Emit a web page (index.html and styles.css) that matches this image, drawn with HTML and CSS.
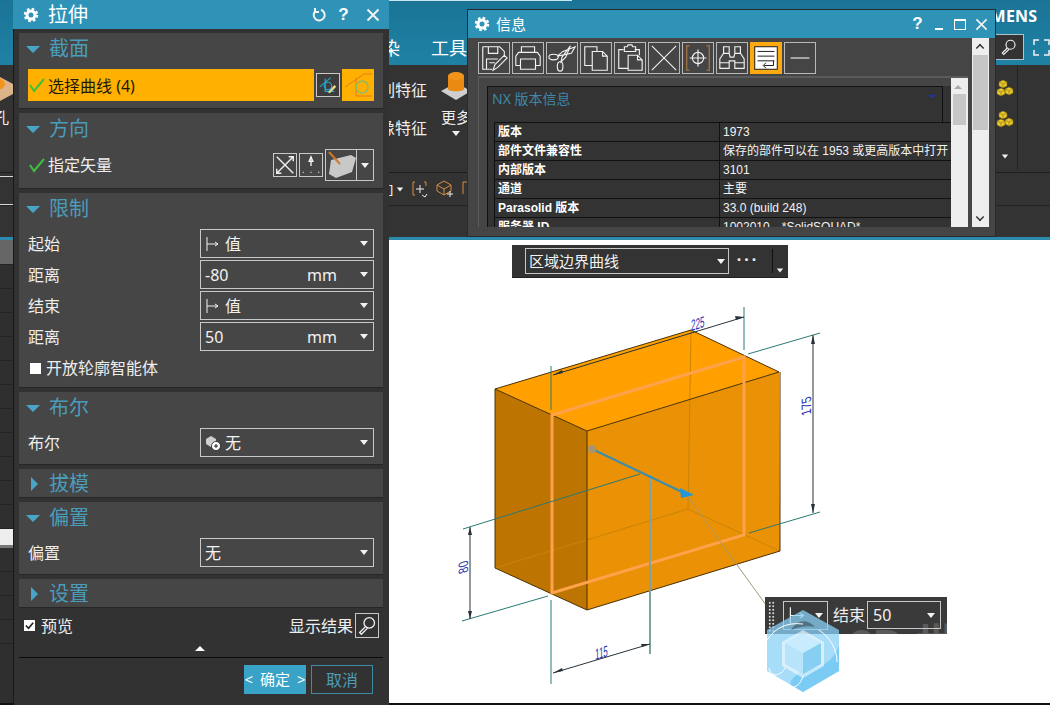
FILE: index.html
```html
<!DOCTYPE html>
<html lang="zh">
<head>
<meta charset="utf-8">
<title>拉伸</title>
<link rel="stylesheet" href="styles.css">
</head>
<body>
<div class="desk">
  <header class="top">
    <span class="menu-item menu-a">渲染</span>
    <span class="menu-item">工具</span>
    <span class="brand">SIEMENS</span>
    <div class="top-tools">
      <span class="top-search"><svg class="ic" viewBox="0 0 24 24"><circle cx="14" cy="9" r="6"/><path d="M10 13l-7 7 2 2 7-7"/></svg></span>
      <svg class="ic fullscreen" viewBox="0 0 17 17"><path d="M1 6V1h5M11 1h5v5M16 11v5h-5M6 16H1v-5"/></svg>
    </div>
  </header>
  <section class="ribbon">
    <div class="rib-left">
      <svg class="hole" viewBox="0 0 26 28"><path class="c-tan" d="M0 10l13-7 13 7v10l-13 7-13-7z"/><ellipse class="c-org" cx="9" cy="10" rx="9" ry="6"/></svg>
      <span class="rib-left-t">孔</span>
    </div>
    <div class="rib-feats">
      <span>阵列特征</span>
      <span>镜像特征</span>
    </div>
    <div class="rib-more">
      <svg class="more-ic" viewBox="0 0 32 32"><path class="c-grey" d="M1 21l15-8 15 8-15 9z"/><path class="c-org2" d="M8 6v13c0 3 16 3 16 0V6z"/><ellipse class="c-org" cx="16" cy="6" rx="8" ry="4"/></svg>
      <span class="more-t">更多</span>
      <i class="caret"></i>
    </div>
    <div class="rib-gold">
      <svg class="gold" viewBox="0 0 18 18"><path d="M7 1l4 2v4l-4 2-4-2V3zM13 8l4 2v4l-4 2-4-2v-4zM5 9l4 2v4l-4 2-4-2v-4z"/><path class="gold-l" d="M3 3l4 2 4-2M7 5v4M9 10l4 2 4-2M13 12v4M1 11l4 2 4-2M5 13v4"/></svg>
      <svg class="gold" viewBox="0 0 18 18"><path d="M7 1l4 2v4l-4 2-4-2V3zM13 8l4 2v4l-4 2-4-2v-4zM5 9l4 2v4l-4 2-4-2v-4z"/><path class="gold-l" d="M3 3l4 2 4-2M7 5v4M9 10l4 2 4-2M13 12v4M1 11l4 2 4-2M5 13v4"/></svg>
      <i class="caret gold-caret"></i>
    </div>
  </section>
  <section class="strip">
    <div class="strip-left"><i></i><i></i></div>
    <span class="strip-txt">]</span><i class="caret strip-caret"></i>
    <svg class="strip-ic" viewBox="0 0 18 18"><path class="or" d="M4 2H2v13h2M13 2h2v4"/><path d="M5 9h8M9 5v8M11 15l3 2 2-3"/></svg>
    <svg class="strip-ic" viewBox="0 0 18 18"><path class="or" d="M1 5l7-4 7 4v6l-7 4-7-4zM1 5l7 4 7-4M8 9v6"/><path d="M14 11v6M11 14h6"/></svg>
    <svg class="strip-ic" viewBox="0 0 18 18"><path class="or" d="M2 14V2h12v4"/></svg>
  </section>
  <section class="strip2"></section>
  <div class="teal-line"></div>
  <main class="main">
    <aside class="rail">
      <div class="rail-row rail-grey"></div>
      <div class="rail-row"></div><div class="rail-row"></div><div class="rail-row"></div><div class="rail-row"></div><div class="rail-row"></div><div class="rail-row"></div><div class="rail-row"></div><div class="rail-row"></div><div class="rail-row"></div><div class="rail-row"></div><div class="rail-row"></div>
      <div class="rail-white"></div>
      <div class="rail-row"></div><div class="rail-row"></div><div class="rail-row"></div><div class="rail-row"></div>
    </aside>
    <div class="canvas">
      <svg class="scene" viewBox="389 240 661 463">
        <polygon class="f-top" points="495,389 691,330 779,372 587,431"/>
        <polygon class="f-left" points="495,389 587,431 587,610 495,568"/>
        <polygon class="f-right" points="587,431 779,372 780,551 587,610"/>
        <path class="hidden" d="M691 330L688 509M495 568L688 509L780 551"/>
        <path class="edge" d="M495 389L691 330L779 372L587 431ZM495 389V568L587 610L780 551V372M587 431V610"/>
        <path class="glow" d="M552 415L744 357V535L552 593Z"/>
        <path class="ext" d="M551 366V410M744 307V350M748 354L820 333M749 533L820 512M463 529L640 474M462 621L548 596M551 600V684"/>
        <path class="ext-g" d="M650 475V654"/>
        <path class="dim" d="M553 375L744 317M813 335V513M470 527V619M553 673L650 644"/>
        <path class="head" d="M553 375l9-5 1 3zM744 317l-9-1 1 4zM813 335l-2 9h4zM813 513l-2-9h4zM470 527l-2 8h4zM470 619l-2-8h4zM553 673l9-5 1 3zM650 644l-9 0 1 3z"/>
        <text class="dtx" transform="translate(691,331) skewY(-17) scale(.62,1.2)">225</text>
        <text class="dtx" transform="matrix(0,-.85,1.05,-.32,811,414)">175</text>
        <text class="dtx" transform="matrix(0,-.85,1.05,-.32,468,572)">80</text>
        <text class="dtx" transform="translate(595,660) skewY(-17) scale(.62,1.2)">115</text>
        <path class="leader" d="M688 497L766 605"/>
        <path class="vec" d="M592 449L682 492"/>
        <path class="vec-head" d="M680 488l14 7-13 3z"/>
        <circle class="ball" cx="592" cy="449" r="4"/>
      </svg>
      <div class="float-a">
        <div class="sel fa-sel"><span>区域边界曲线</span><i class="caret push"></i></div>
        <span class="dots">···</span>
        <span class="fa-div"></span>
        <i class="caret fa-caret"></i>
      </div>
      <div class="float-b">
        <span class="grip"></span>
        <div class="sel fb-sel1"><svg class="lim" viewBox="0 0 16 16"><path d="M2 1v14M2 8h11M10 6l3 2-3 2"/></svg><i class="caret push"></i></div>
        <span class="fb-t">结束</span>
        <div class="sel fb-sel2"><span>50</span><i class="caret push"></i></div>
        <span class="wm-text">3D 世界</span>
      </div>
      <svg class="wm" viewBox="0 0 72 82">
        <path class="wm-a" d="M36 0l36 20v41L36 82 0 61V20z"/>
        <path class="wm-b" d="M36 82l36-21V36C66 52 52 60 38 58 28 66 22 70 24 75z"/>
        <path class="wm-d" d="M24 20C30 10 40 8 48 17c-8-2-16 0-24 3z"/>
        <path class="wm-c" d="M0 30C8 18 20 12 36 14M52 20c12 8 18 20 18 32M36 66c-2 6-4 10-12 12M18 58C14 66 4 68 2 58"/>
        <path class="wm-ring" d="M36 20l21 12v24L36 68 15 56V32z"/>
        <path class="wm-face1" d="M36 23l18 10-18 10-18-10z"/>
        <path class="wm-face2" d="M18 33l18 10v21L18 54z"/>
        <path class="wm-face3" d="M54 33L36 43v21l18-10z"/>
      </svg>
    </div>
  </main>
  <div class="base-line"></div>

  <!-- 拉伸 dialog -->
  <div class="dialog">
    <div class="dlg-title">
      <svg class="gear" viewBox="0 0 16 16"><circle cx="8" cy="8" r="4"/><circle class="teeth" cx="8" cy="8" r="6"/></svg>
      <span class="dlg-name">拉伸</span>
      <svg class="ic tb-ic reset" viewBox="0 0 16 16"><path d="M5 3.500A5.500 5.500 0 1 0 10 2.800M4 1v4h4"/></svg>
      <span class="tb-q">?</span>
      <svg class="ic tb-ic" viewBox="0 0 16 16"><path d="M2.500 2.500l11 11M13.500 2.500l-11 11"/></svg>
    </div>
    <div class="dlg-body">
      <section class="sec">
        <h2 class="sec-h"><i class="tri-d"></i>截面</h2>
        <div class="sec-b">
          <div class="pick">
            <div class="pick-main"><svg class="check" viewBox="0 0 16 16"><path d="M1 8l4 6L15 2"/></svg><span>选择曲线 (4)</span></div>
            <span class="btn-24 btn-curve"><svg viewBox="0 0 24 24"><path class="blu" d="M3 14L15 4M9 5v14h10"/><circle class="blu" cx="12" cy="13" r="4"/><path class="yel" d="M12 20l7-8 2 2-7 7z"/></svg></span>
            <span class="btn-32"><svg viewBox="0 0 32 32"><path class="rd" d="M3 18L22 5h8M14 9v18h16"/><circle class="gr" cx="20" cy="18" r="6"/></svg></span>
          </div>
        </div>
      </section>
      <section class="sec">
        <h2 class="sec-h"><i class="tri-d"></i>方向</h2>
        <div class="sec-b">
          <div class="row">
            <svg class="check check-g" viewBox="0 0 16 16"><path d="M1 8l4 6L15 2"/></svg><span>指定矢量</span>
            <span class="vec-tools">
              <span class="btn-24"><svg class="ic" viewBox="0 0 24 24"><path d="M3 3l18 18M21 3L3 21M16 3h5v5M3 16v5h5"/></svg></span>
              <span class="btn-24"><svg class="ic" viewBox="0 0 24 24"><path d="M12 5v8M3 20h1M11.500 20h1M20 20h1"/><path d="M12 3l-2 5h4z"/></svg></span>
              <span class="vec-pick">
                <span class="vec-pick-ic"><svg viewBox="0 0 30 30"><path class="sheet" d="M5 10l20-5 5 3-4 14-16 6-7-4z"/><path class="or2" d="M3 2l11 12"/></svg></span>
                <span class="vec-pick-ar"><i class="caret"></i></span>
              </span>
            </span>
          </div>
        </div>
      </section>
      <section class="sec">
        <h2 class="sec-h"><i class="tri-d"></i>限制</h2>
        <div class="sec-b stack">
          <div class="row"><span class="lab">起始</span><div class="sel"><svg class="lim" viewBox="0 0 16 16"><path d="M2 1v14M2 8h11M10 6l3 2-3 2"/></svg><span>值</span><i class="caret push"></i></div></div>
          <div class="row"><span class="lab">距离</span><div class="sel"><span>-80</span><span class="unit">mm</span><i class="caret"></i></div></div>
          <div class="row"><span class="lab">结束</span><div class="sel"><svg class="lim" viewBox="0 0 16 16"><path d="M2 1v14M2 8h11M10 6l3 2-3 2"/></svg><span>值</span><i class="caret push"></i></div></div>
          <div class="row"><span class="lab">距离</span><div class="sel"><span>50</span><span class="unit">mm</span><i class="caret"></i></div></div>
          <div class="row row-chk"><i class="box"></i><span>开放轮廓智能体</span></div>
        </div>
      </section>
      <section class="sec">
        <h2 class="sec-h"><i class="tri-d"></i>布尔</h2>
        <div class="sec-b">
          <div class="row"><span class="lab">布尔</span><div class="sel"><svg class="bool" viewBox="0 0 16 16"><path class="boolc" d="M1 4l5-3 5 3v5l-5 3-5-3z"/><circle class="boold" cx="11" cy="11" r="4.500"/><path class="boolp" d="M9 11h4M11 9v4"/></svg><span>无</span><i class="caret push"></i></div></div>
        </div>
      </section>
      <section class="sec sec-c"><h2 class="sec-h"><i class="tri-r"></i>拔模</h2></section>
      <section class="sec">
        <h2 class="sec-h"><i class="tri-d"></i>偏置</h2>
        <div class="sec-b">
          <div class="row"><span class="lab">偏置</span><div class="sel"><span>无</span><i class="caret push"></i></div></div>
        </div>
      </section>
      <section class="sec sec-c"><h2 class="sec-h"><i class="tri-r"></i>设置</h2></section>
      <div class="dlg-foot">
        <div class="foot-row">
          <i class="box box-on"><svg viewBox="0 0 12 12"><path d="M2 6l3 3 5-6"/></svg></i>
          <span>预览</span>
          <span class="foot-res">显示结果</span>
          <span class="btn-res"><svg class="ic" viewBox="0 0 24 24"><circle cx="14" cy="9" r="6"/><path d="M10 13l-7 7 2 2 7-7"/></svg></span>
        </div>
        <div class="foot-tri"><i></i></div>
        <div class="foot-btns">
          <span class="ok">&lt; 确定 &gt;</span>
          <span class="cancel">取消</span>
        </div>
      </div>
    </div>
  </div>

  <!-- 信息 window -->
  <div class="info">
    <div class="info-title">
      <svg class="gear" viewBox="0 0 16 16"><circle cx="8" cy="8" r="4"/><circle class="teeth" cx="8" cy="8" r="6"/></svg>
      <span class="info-name">信息</span>
      <span class="tb-q info-q">?</span>
      <span class="w-min"></span>
      <span class="w-max"></span>
      <svg class="ic w-x" viewBox="0 0 14 14"><path d="M1.500 1.500l11 11M12.500 1.500l-11 11"/></svg>
    </div>
    <div class="info-main">
      <div class="info-left">
        <div class="tools">
          <span class="tool"><svg class="ic" viewBox="0 0 32 32"><path d="M4 4h18l5 5v6M4 4v24h10M10 4v7h10V4M8 28V17h12M15 29l2-6 10-10 3 3-10 10zM11 21h6"/></svg></span>
          <span class="tool"><svg class="ic" viewBox="0 0 32 32"><path d="M9 10V4h14v6M8 24H3V14l3-4h20l3 4v10h-5M8 17h16v11H8z"/></svg></span>
          <span class="tool"><svg class="ic" viewBox="0 0 32 32"><ellipse cx="7" cy="15" rx="5" ry="3"/><ellipse cx="14" cy="25" rx="3" ry="5"/><path d="M11 14l15-3 4-7-13 5zM15 20l5-5 5-12-9 12z"/></svg></span>
          <span class="tool"><svg class="ic" viewBox="0 0 32 32"><path d="M12 24H4V4h13v5M12 9h11l5 5v15H12zM23 9v5h5"/></svg></span>
          <span class="tool"><svg class="ic" viewBox="0 0 32 32"><path d="M14 27H4V7h5M21 7h5v6M10 7V4h3l1-2h4l1 2h3v5H10zM14 13h10l5 5v11H14zM24 13v5h5"/></svg></span>
          <span class="tool"><svg class="ic" viewBox="0 0 32 32"><path d="M3 3l26 26M29 3L3 29"/></svg></span>
          <span class="tool"><svg class="ic" viewBox="0 0 32 32"><path class="or" d="M7 3H4v26h3M25 3h3v26h-3"/><circle cx="16" cy="16" r="6"/><path d="M7 16h18M16 7v18"/></svg></span>
          <span class="tool"><svg class="ic" viewBox="0 0 32 32"><path d="M3 27V17l4-6V4h6v7l1 4h4l1-4V4h6v7l4 6v10H19v-8h-6v8zM7 11h6M19 11h6M3 21h10M19 21h10"/></svg></span>
          <span class="tool tool-on"><svg viewBox="0 0 32 32"><rect class="wrap-bg" x="4" y="4" width="24" height="24"/><path class="wrap-l" d="M7 9h18M7 14h18M7 19h18M24 19v5h-10M16 21l-3 3 3 3"/></svg></span>
          <span class="tool"><svg class="ic" viewBox="0 0 32 32"><path d="M6 16h20"/></svg></span>
        </div>
        <div class="pane">
          <div class="pane-view">
            <div class="panel-wrap">
              <div class="panel-h"><span>NX 版本信息</span><i class="blue-mark"></i></div>
              <table class="vt">
                <tr><th>版本</th><td>1973</td></tr>
                <tr><th>部件文件兼容性</th><td>保存的部件可以在 1953 或更高版本中打开 ‹‹</td></tr>
                <tr><th>内部版本</th><td>3101</td></tr>
                <tr><th>通道</th><td>主要</td></tr>
                <tr><th>Parasolid 版本</th><td>33.0 (build 248)</td></tr>
                <tr><th>服务器 ID</th><td>1002010，*SolidSQUAD*</td></tr>
              </table>
            </div>
          </div>
          <div class="sb sb-in"><i class="up"></i><span class="thumb thumb-in"></span></div>
        </div>
      </div>
      <div class="sb sb-out"><i class="up-o"></i><span class="thumb thumb-out"></span><i class="dn-o"></i></div>
    </div>
  </div>
</div>
</body>
</html>
```
FILE: styles.css
```css
* { box-sizing: border-box; }
html, body { margin: 0; padding: 0; }
body { background: #333; font-family: "Noto Sans", "Noto Sans CJK SC", sans-serif; color: #eee; font-size: 16px; }
i { display: block; font-style: normal; }
svg { display: block; }
.ic { fill: none; stroke: #f2f2f2; stroke-width: 1.5; }
.desk { position: relative; width: 1050px; height: 705px; overflow: hidden; display: flex; flex-direction: column; }
.caret { width: 0; height: 0; border: 4px solid transparent; border-top: 5px solid #f2f2f2; border-bottom: 0; flex: none; }
.push { margin-left: auto; }

/* background application */
.top { height: 65px; flex: none; background: linear-gradient(#1a7496, #1f82a5); display: flex; align-items: flex-end; color: #fff; position: relative; padding: 0 0 0 364px; gap: 31px; }
.top::before { content: ""; position: absolute; left: 389px; top: 0; width: 183px; height: 1px; background: #c9e6ef; }
.menu-item { font-size: 18px; line-height: 34px; width: 36px; white-space: nowrap; flex: none; }
.brand { position: absolute; left: 966px; top: 5px; font-size: 16px; font-weight: 700; letter-spacing: .2px; }
.top-tools { margin-left: auto; display: flex; align-items: center; gap: 9px; padding-bottom: 5px; }
.top-search { width: 30px; height: 26px; background: #333; border: 1px solid #b0c4cc; padding: 3px 5px; display: block; }
.top-search svg { width: 18px; height: 18px; }
.fullscreen { width: 17px; height: 17px; }
.ribbon { height: 108px; flex: none; background: #333; display: flex; border-bottom: 1px solid #1e1e1e; position: relative; }
.rib-left { width: 13px; flex: none; overflow: hidden; padding-top: 9px; }
.hole { width: 26px; height: 28px; margin-left: -13px; }
.rib-left-t { display: block; margin: 5px 0 0 -6px; font-size: 15px; color: #eee; line-height: 20px; }
.c-tan { fill: #dcb48a; }
.c-org { fill: #f2941c; }
.c-org2 { fill: #ea8a12; }
.c-grey { fill: #cfcfcf; }
.rib-feats { margin-left: 350px; width: 64px; display: flex; flex-direction: column; gap: 17px; padding-top: 15px; text-align: right; font-size: 16px; line-height: 21px; white-space: nowrap; }
.rib-more { width: 34px; margin-left: 12px; display: flex; flex-direction: column; align-items: center; padding-top: 5px; }
.more-ic { width: 32px; height: 32px; }
.more-t { font-size: 15px; line-height: 20px; margin-top: 5px; white-space: nowrap; }
.rib-more .caret { margin-top: 4px; }
.rib-gold { margin-left: 519px; width: 26px; padding-top: 14px; display: flex; flex-direction: column; gap: 13px; align-items: center; border-right: 1px solid #222; height: 105px; }
.gold { width: 18px; height: 18px; fill: #e8c82c; stroke: #7b6510; stroke-width: .5; }
.gold-l { fill: none; stroke: #8a6e10; stroke-width: .6; }
.gold-caret { margin-top: 13px; transform: scale(.8); }
.strip { height: 33px; flex: none; background: #333; border-bottom: 1px solid #222; display: flex; align-items: center; gap: 7px; padding-left: 389px; position: relative; }
.strip-left { position: absolute; left: 0; top: 3px; width: 13px; height: 29px; border-top: 1px solid #d8d8d8; border-bottom: 1px solid #d8d8d8; }
.strip-txt { font-size: 13px; line-height: 16px; margin-right: -4px; }
.strip-caret { transform: scale(.8); margin-right: 0; }
.strip-ic { width: 18px; height: 18px; fill: none; stroke: #eee; stroke-width: 1; }
.strip-ic .or { stroke: #d88b3c; }
.strip2 { height: 31px; flex: none; background: #333; }
.teal-line { height: 3px; flex: none; background: #2a8bad; }
.main { flex: 1; display: flex; min-height: 0; }
.rail { width: 389px; flex: none; background: #2f2f2f; display: flex; flex-direction: column; overflow: hidden; }
.rail-row { height: 24px; flex: none; border-bottom: 1px solid #232323; }
.rail-grey { background: #666; height: 25px; }
.rail-white { height: 19px; flex: none; background: #eee; border-bottom: 3px solid #777; }
.canvas { flex: 1; background: #fff; position: relative; }
.base-line { height: 2px; flex: none; background: #111; }
.scene { width: 661px; height: 463px; }

.f-top { fill: #ffa000; }
.f-left { fill: #bd7400; }
.f-right { fill: #ea9105; }
.hidden { fill: none; stroke: #c98408; stroke-width: 1; }
.edge { fill: none; stroke: #4a3204; stroke-width: 1; }
.glow { fill: none; stroke: #ffa24c; stroke-width: 3; }
.ext { fill: none; stroke: #2b7a72; stroke-width: 1; }
.ext-g { fill: none; stroke: #7fa49e; stroke-width: 2; }
.dim { fill: none; stroke: #26323a; stroke-width: 1; }
.head { fill: #26323a; }
.dtx { font-family: "Liberation Sans", sans-serif; font-size: 13px; fill: #2a35b0; }
.leader { fill: none; stroke: #a49a6e; stroke-width: 1; }
.vec { fill: none; stroke: #3a8faa; stroke-width: 2; }
.vec-head { fill: #1f97d8; }
.ball { fill: #a8946e; }

.sel { height: 29px; flex: none; width: 174px; margin-left: auto; border: 1px solid #c8c8c8; display: flex; align-items: center; padding: 0 5px 0 4px; font-size: 16px; color: #f2f2f2; white-space: nowrap; line-height: 20px; }
.lim { width: 16px; height: 16px; fill: none; stroke: #f2f2f2; stroke-width: 1; margin-right: 4px; }
.unit { margin-left: auto; margin-right: 23px; }
.float-a { position: absolute; left: 123px; top: 5px; width: 276px; height: 33px; background: #333; border-bottom: 1px solid #222; display: flex; align-items: flex-start; padding: 3px 0 0 13px; }
.fa-sel { width: 204px; height: 26px; margin: 0; padding: 0 3px; font-size: 15px; }
.dots { width: 38px; text-align: center; font-size: 16px; font-weight: 700; line-height: 22px; letter-spacing: 3px; }
.fa-div { width: 1px; height: 24px; margin: 1px 0 0 5px; background: #111; }
.fa-caret { margin: 20px 0 0 3px; transform: scale(.8); }
.float-b { position: absolute; left: 376px; top: 357px; width: 182px; height: 37px; background: #3a3a3a; display: flex; align-items: flex-start; padding-top: 4px; overflow: hidden; z-index: 1; isolation: isolate; }
.grip { width: 7px; height: 32px; margin: 0 0 0 3px; flex: none; background-image: radial-gradient(#ddd 1.200px, transparent 1.300px); background-size: 3.500px 3.500px; }
.fb-sel1 { width: 45px; margin: 0 0 0 8px; height: 29px; padding: 0 4px; }
.fb-sel1 .lim { width: 19px; height: 19px; }
.fb-t { font-size: 16px; line-height: 28px; margin-left: 5px; flex: none; }
.fb-sel2 { width: 74px; margin: 0 0 0 2px; height: 28px; padding: 0 5px; }
.wm-text { position: absolute; left: 85px; top: 27px; font: 700 42px/1 "Liberation Sans", "Noto Sans CJK SC", sans-serif; color: #5a5a5a; white-space: nowrap; z-index: -1; }
.wm { position: absolute; left: 378px; top: 370px; width: 72px; height: 82px; z-index: 2; }
.wm-a { fill: #8ad2f6; fill-opacity: .75; }
.wm-b { fill: #6fc8f4; fill-opacity: .8; }
.wm-d { fill: #33474f; fill-opacity: .55; }
.wm-c { fill: none; stroke: #fff; stroke-width: 1; }
.wm-ring { fill: #fff; fill-opacity: .55; }
.wm-face1 { fill: #c8ecfd; }
.wm-face2 { fill: #b7e4fa; }
.wm-face3 { fill: #86cff3; }

/* dialog */
.dialog { position: absolute; left: 13px; top: 0; width: 376px; height: 705px; background: #323232; border-left: 1px solid #191919; display: flex; flex-direction: column; z-index: 5; }
.dlg-title { height: 29px; flex: none; background: #2f93b8; display: flex; align-items: center; margin-left: -1px; padding: 0 8px 0 10px; color: #fff; }
.gear { width: 16px; height: 16px; fill: none; stroke: #fff; stroke-width: 3; flex: none; }
.teeth { stroke-width: 2.500; stroke-dasharray: 2.500 2.200; }
.dlg-name { font-size: 20px; line-height: 24px; margin-left: 9px; }
.tb-ic { width: 16px; height: 16px; stroke-width: 2; flex: none; }
.reset { margin-left: auto; }
.tb-q { font: 700 17px/20px "Liberation Sans", sans-serif; width: 11px; margin: 0 16px 0 11px; text-align: center; }
.dlg-body { flex: 1; display: flex; flex-direction: column; gap: 4px; padding: 4px 6px 0 5px; }
.sec { background: #464646; border-bottom: 1px solid #262626; flex: none; }
.sec-h { margin: 0; height: 30px; font-size: 20px; font-weight: 400; line-height: 28px; color: #4a9cbb; display: flex; align-items: center; padding: 2px 0 0 7px; white-space: nowrap; }
.sec-c .sec-h { height: 28px; padding-top: 2px; }
.tri-d { width: 0; height: 0; border: 7px solid transparent; border-top: 7px solid #48a5c8; border-bottom: 0; margin: 0 9px 0 0; }
.tri-r { width: 0; height: 0; border: 7px solid transparent; border-left: 7px solid #48a5c8; border-right: 0; margin: 0 11px 0 5px; }
.sec-b { padding: 6px 9px 7px; }
.stack { display: flex; flex-direction: column; gap: 2px; padding-bottom: 4px; }
.row { display: flex; align-items: center; font-size: 16px; line-height: 20px; white-space: nowrap; }
.lab { width: 172px; flex: none; }
.pick { display: flex; align-items: center; height: 32px; gap: 2px; }
.pick-main { width: 286px; height: 32px; background: #ffb000; color: #1f1a0c; display: flex; align-items: center; font-size: 16px; flex: none; }
.check { width: 16px; height: 16px; fill: none; stroke: #3fbf3f; stroke-width: 2; margin: 0 3px 0 1px; flex: none; }
.btn-24 { width: 24px; height: 24px; border: 1px solid #c8c8c8; display: block; flex: none; }
.btn-24 svg { width: 22px; height: 22px; }
.btn-curve { background: #3c3c3c; }
.blu { fill: none; stroke: #29a3c9; stroke-width: 1.300; }
.yel { fill: #ecd98c; }
.btn-32 { width: 32px; height: 32px; background: #ffb000; flex: none; }
.btn-32 svg { width: 32px; height: 32px; }
.rd { fill: none; stroke: #e27b26; stroke-width: 1; }
.gr { fill: none; stroke: #8dbb6a; stroke-width: 1.500; }
.row .vec-tools { margin-left: auto; display: flex; align-items: center; gap: 2px; }
.vec-pick { display: flex; width: 49px; height: 32px; border: 1px solid #c8c8c8; }
.vec-pick-ic { width: 31px; display: block; border-right: 1px solid #c8c8c8; }
.vec-pick-ic svg { width: 30px; height: 30px; }
.sheet { fill: #c8c8c8; }
.or2 { fill: none; stroke: #d0792b; stroke-width: 2; }
.vec-pick-ar { flex: 1; display: flex; align-items: center; justify-content: center; }
.row-chk { height: 28px; margin-top: 1px; margin-bottom: 1px; }
.box { width: 11px; height: 11px; background: #fff; margin: 0 5px 0 2px; flex: none; }
.bool { width: 16px; height: 16px; margin-right: 4px; flex: none; }
.boolc { fill: #cfcfcf; }
.boold { fill: #fff; stroke: #222; stroke-width: .8; }
.boolp { fill: none; stroke: #222; stroke-width: 1; }
.dlg-foot { flex: 1; display: flex; flex-direction: column; }
.foot-row { display: flex; align-items: center; height: 26px; padding: 0 4px 0 5px; font-size: 16px; }
.box-on { width: 11px; height: 11px; margin: 0 6px 0 0; }
.box-on svg { width: 11px; height: 11px; fill: none; stroke: #222; stroke-width: 1.800; }
.foot-res { margin-left: auto; margin-right: 2px; }
.btn-res { width: 24px; height: 25px; border: 1px solid #c8c8c8; display: block; padding: 1px; }
.btn-res svg { width: 21px; height: 21px; }
.foot-tri { height: 20px; border-bottom: 1px solid #0c0c0c; flex: none; padding: 8px 0 0 176px; }
.foot-tri i { width: 0; height: 0; border: 5px solid transparent; border-bottom: 5px solid #fff; border-top: 0; }
.foot-btns { display: flex; justify-content: flex-end; gap: 5px; margin-top: 7px; padding-right: 10px; }
.ok, .cancel { height: 29px; line-height: 28px; text-align: center; font-size: 16px; display: block; white-space: nowrap; }
.ok { width: 62px; background: #38a3c6; color: #fff; word-spacing: 3px; font-size: 15px; }
.cancel { width: 62px; border: 1px solid #3f8aa6; color: #4d9cba; }

/* info window */
.info { position: absolute; left: 468px; top: 10px; width: 527px; height: 226px; background: #454545; display: flex; flex-direction: column; box-shadow: 0 0 0 1px #2a2a2a; z-index: 4; }
.info-title { height: 28px; flex: none; background: #2f93b8; display: flex; align-items: center; padding: 0 7px 0 6px; color: #fff; }
.info-name { font-size: 15px; margin-left: 6px; line-height: 20px; }
.info-q { margin: 0 7px 0 auto; }
.w-min { width: 8px; height: 2px; background: #fff; margin: 9px 11px 0 5px; }
.w-max { width: 12px; height: 11px; border: 1px solid #fff; border-top-width: 2px; margin-right: 9px; }
.w-x { width: 13px; height: 13px; stroke-width: 1.800; }
.info-main { flex: 1; display: flex; min-height: 0; padding-bottom: 9px; }
.info-left { width: 504px; flex: none; display: flex; flex-direction: column; padding-left: 10px; }
.tools { display: flex; gap: 2px; padding-top: 4px; height: 38px; flex: none; }
.tool { width: 32px; height: 32px; border: 1px solid #b8b8b8; display: block; flex: none; }
.tool svg { width: 30px; height: 30px; stroke-width: 1.200; }
.ic .or { stroke: #b47a42; }
.tool-on { background: #fbaa12; border-color: #fbaa12; }
.wrap-bg { fill: #fff; stroke: #111; stroke-width: 1; }
.wrap-l { fill: none; stroke: #111; stroke-width: 1; }
.pane { flex: 1; min-height: 0; display: flex; border-top: 2px solid #5b5b5b; border-left: 1px solid #5b5b5b; width: 490px; }
.pane-view { flex: 1; min-width: 0; overflow: hidden; padding: 8px 0 0 8px; }
.panel-wrap { background: #333; border-left: 1px solid #111; height: 200px; }
.panel-h { height: 36px; border-top: 1px solid #111; border-right: 1px solid #111; width: 455px; display: flex; padding: 2px 0 0 4px; font-size: 14px; line-height: 20px; color: #3f87a6; position: relative; }
.blue-mark { position: absolute; right: 6px; top: 8px; width: 0; height: 0; border: 4px solid transparent; border-top: 3px solid #2332a8; border-bottom: 0; }
.vt { border-collapse: collapse; table-layout: fixed; width: 457px; margin-left: 6px; font: 12px/18px "Liberation Sans", "Noto Sans CJK SC", sans-serif; color: #f2f2f2; }
.vt th, .vt td { border-top: 1px solid #111; border-bottom: 1px solid #111; height: 19px; padding: 0 3px; text-align: left; white-space: nowrap; overflow: hidden; }
.vt th { width: 225px; border-left: 1px solid #111; border-right: 1px solid #111; font-weight: 700; color: #fff; }
.sb { background: #eee; flex: none; position: relative; display: block; }
.sb-in { width: 17px; }
.up { position: absolute; left: 3px; top: 7px; width: 0; height: 0; border: 4px solid transparent; border-bottom: 4px solid #aaa; border-top: 0; }
.thumb { position: absolute; display: block; background: #c6c6c6; }
.thumb-in { left: 2px; right: 2px; top: 16px; height: 31px; }
.sb-out { width: 17px; margin: 0; }
.thumb-out { left: 1px; right: 1px; top: 17px; height: 75px; }
.up-o, .dn-o { position: absolute; left: 4px; width: 8px; height: 8px; border: solid #333; border-width: 2px 0 0 2px; transform: rotate(45deg) scale(.75); }
.up-o { top: 6px; }
.dn-o { bottom: 6px; transform: rotate(225deg) scale(.75); }
```
